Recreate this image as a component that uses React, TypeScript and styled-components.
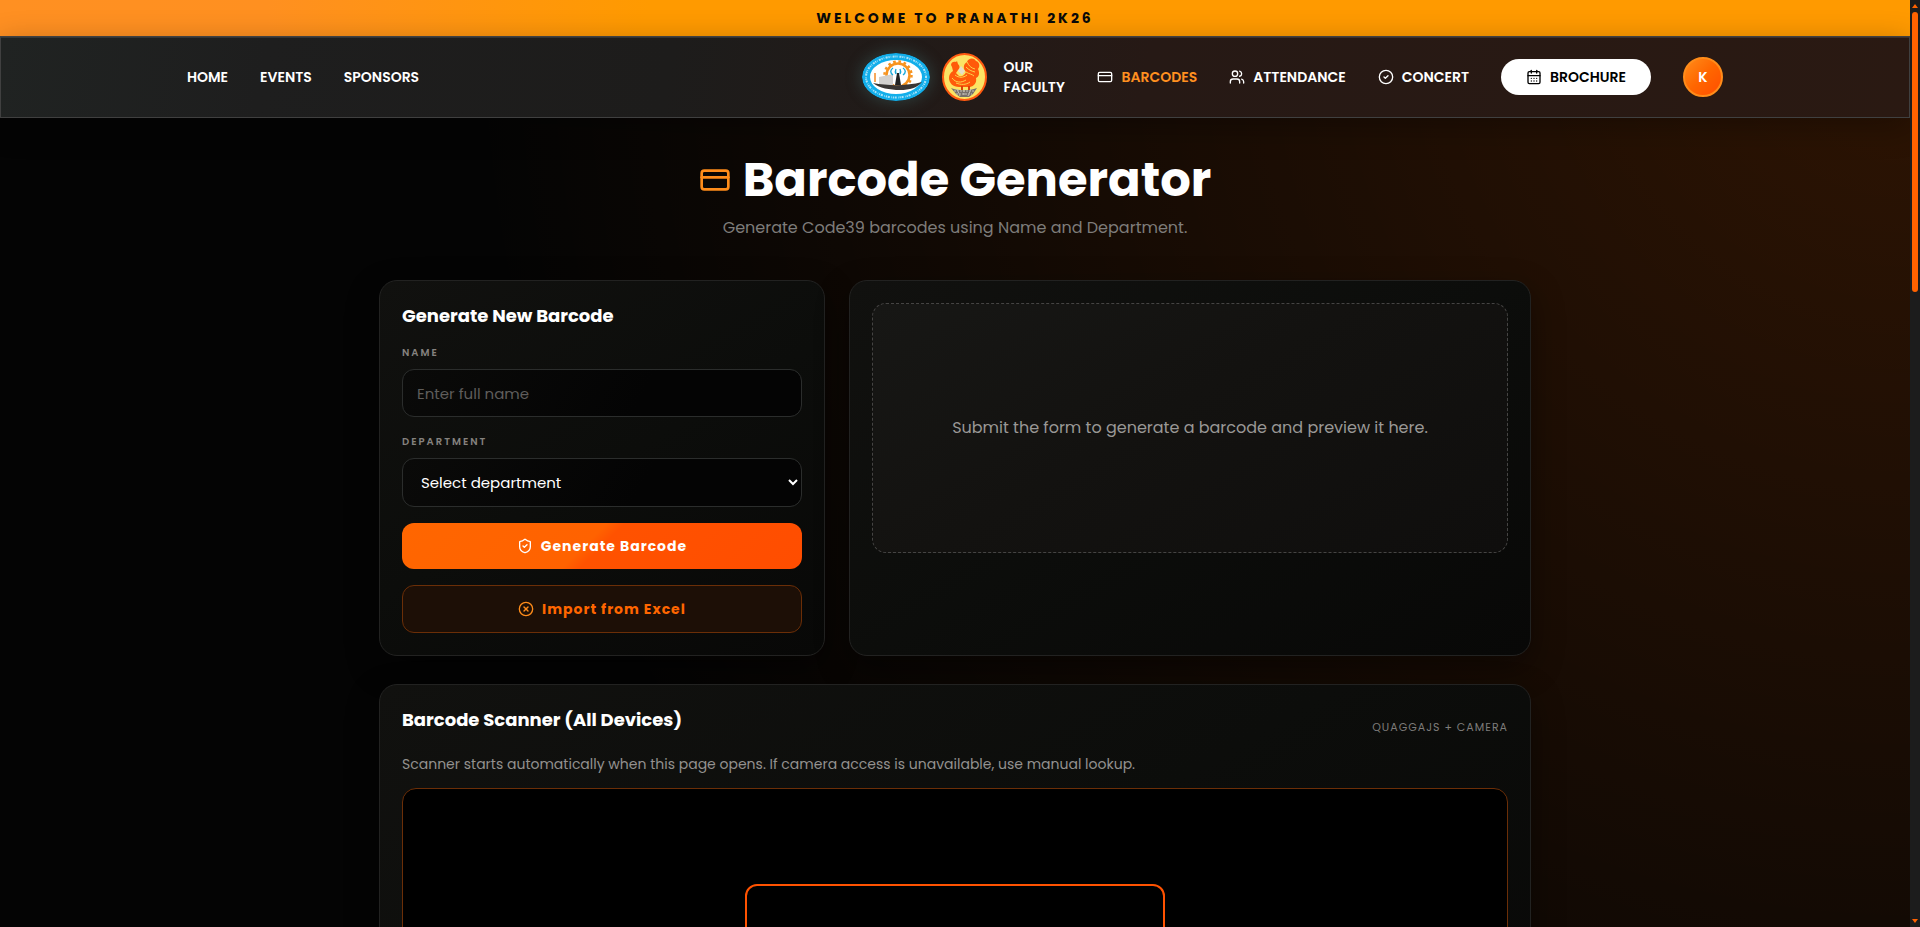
import React from "react";
import styled, { createGlobalStyle } from "styled-components";
import { CreditCard, Users, CircleCheck, CalendarDays, ShieldCheck, CircleX } from "lucide-react";

const GlobalStyle = createGlobalStyle`
  *, *::before, *::after { box-sizing: border-box; }
  body {
    margin: 0;
    background: #040404;
    color: #fff;
    font-family: Poppins, Inter, sans-serif;
    font-size: 16px;
    line-height: 24px;
  }
  h1, h2, p { margin: 0; }
  button, input, select { font-family: inherit; }
`;

const Shell = styled.div`
  display: flex;
  height: 100vh;
`;

const Page = styled.div`
  flex: 1;
  min-width: 0;
  overflow-y: auto;
  scrollbar-width: none;
  background: radial-gradient(circle at top right, rgba(255, 102, 0, 0.17), transparent 68%) #040404;
`;

const Rail = styled.div`
  flex: none;
  display: flex;
  flex-direction: column;
  justify-content: space-between;
  align-items: center;
  width: 10px;
  padding: 4px 0;
  background: #1c1c1c;
`;

const RailBody = styled.div`
  flex: 1;
  width: 6px;
  padding: 4px 0;
`;

const Thumb = styled.div`
  height: 31%;
  border-radius: 3px;
  background: #ff6200;
`;

const Arrow = styled.div<{ $down?: boolean }>`
  border: 3px solid transparent;
  border-top-width: ${(p) => (p.$down ? "4px" : "0")};
  border-bottom-width: ${(p) => (p.$down ? "0" : "4px")};
  border-top-color: ${(p) => (p.$down ? "#ff6200" : "transparent")};
  border-bottom-color: ${(p) => (p.$down ? "transparent" : "#ff6200")};
`;

const Banner = styled.div`
  height: 36px;
  background: linear-gradient(90deg, #ff9022 0%, #ff9020 14%, #ff9a00 34%, #ff9a00 100%);
  color: #0a0a0a;
  font-size: 14px;
  font-weight: 700;
  line-height: 36px;
  letter-spacing: 3px;
  text-align: center;
`;

const NavBar = styled.header`
  position: relative;
  border: 1px solid #404040;
  background: linear-gradient(100deg, #202322 0%, #1e1e1e 14%, #1d1c1b 35%, #261915 60%, #2a1912 100%);
  box-shadow: 0 8px 32px rgba(0, 0, 0, 0.3), inset 0 1px 0 rgba(255, 255, 255, 0.1);
`;

const NavInner = styled.div`
  display: flex;
  justify-content: space-between;
  align-items: center;
  max-width: 1536px;
  height: 80px;
  margin: 0 auto;
`;

const NavGroup = styled.nav`
  display: flex;
  align-items: center;
  gap: 32px;
`;

const NavLink = styled.a<{ $active?: boolean; $wrap?: boolean }>`
  display: flex;
  align-items: center;
  gap: 8px;
  width: ${(p) => (p.$wrap ? "62px" : "auto")};
  color: ${(p) => (p.$active ? "#ff9020" : "#fff")};
  font-size: 14px;
  font-weight: 600;
  line-height: 20px;
  text-decoration: none;
  text-transform: uppercase;
  svg { color: #fff; }
`;

const Logos = styled.div`
  display: flex;
  align-items: center;
  gap: 12px;
`;

const LogoCluster = styled.div`
  display: flex;
  align-items: center;
  gap: 16px;
`;

const CollegeLogo = styled.svg`
  display: block;
  border-radius: 50%;
  box-shadow: 0 0 14px 3px rgba(64, 110, 110, 0.35);
`;

const RoosterLogo = styled.svg`
  display: block;
`;

const Brochure = styled.button`
  display: flex;
  justify-content: center;
  align-items: center;
  gap: 8px;
  min-width: 150px;
  height: 36px;
  padding: 0 24px;
  border: 0;
  border-radius: 18px;
  background: #fff;
  color: #000;
  font-size: 14px;
  font-weight: 600;
  line-height: 20px;
`;

const Avatar = styled.button`
  width: 40px;
  height: 40px;
  padding: 0;
  border: 2px solid #ff8c1a;
  border-radius: 50%;
  background: linear-gradient(135deg, #ff8c1a 0%, #ff6600 50%, #ff4d00 100%);
  color: #fff;
  font-size: 14px;
  font-weight: 600;
`;

const Main = styled.main`
  display: flex;
  flex-direction: column;
  max-width: 1152px;
  margin: 0 auto;
  padding: 32px 0 64px;
`;

const Title = styled.h1`
  display: flex;
  justify-content: center;
  align-items: center;
  gap: 12px;
  font-size: 48px;
  font-weight: 700;
  line-height: 60px;
  svg { color: #ff8c1a; }
`;

const Subtitle = styled.p`
  margin: 6px 0 40px;
  color: #7e7c7a;
  text-align: center;
`;

const Columns = styled.div`
  display: grid;
  grid-template-columns: 17fr 26fr;
  gap: 24px;
  margin-bottom: 28px;
`;

const Card = styled.section`
  padding: 22px;
  border: 1px solid #222221;
  border-radius: 18px;
  background: linear-gradient(150deg, #11110f 0%, #0c0d0b 50%, #080807 100%);
  box-shadow: 0 12px 32px rgba(0, 0, 0, 0.4);
`;

const CardTitle = styled.h2`
  font-size: 18px;
  font-weight: 700;
  line-height: 25px;
`;

const Form = styled.form`
  display: flex;
  flex-direction: column;
  gap: 16px;
`;

const Field = styled.div`
  display: flex;
  flex-direction: column;
  gap: 8px;
`;

const Label = styled.label`
  color: #85827f;
  font-size: 10px;
  font-weight: 600;
  line-height: 17px;
  letter-spacing: 2px;
  text-transform: uppercase;
`;

const controlBase = `
  width: 100%;
  border: 1px solid #2b2d2c;
  border-radius: 12px;
  background: linear-gradient(120deg, #0a0a09, #040404 60%);
  font-size: 15px;
`;

const TextInput = styled.input`
  ${controlBase}
  height: 48px;
  padding: 0 14px;
  color: #fff;
  &::placeholder { color: #5f5d5b; opacity: 1; }
`;

const Select = styled.select`
  ${controlBase}
  height: 49px;
  padding: 0 0 0 14px;
  color: #fff;
`;

const Action = styled.button<{ $outline?: boolean }>`
  display: flex;
  justify-content: center;
  align-items: center;
  gap: 8px;
  height: ${(p) => (p.$outline ? "48px" : "46px")};
  border: ${(p) => (p.$outline ? "1px solid #6b2e07" : "0")};
  border-radius: 12px;
  background: ${(p) => (p.$outline ? "#1d0f06" : "linear-gradient(135deg, #ff6600 0%, #ff6200 46%, #ff5200 50%, #ff4d00 100%)")};
  color: ${(p) => (p.$outline ? "#ff6600" : "#fff")};
  font-size: 14px;
  font-weight: 700;
  letter-spacing: 1px;
  svg { color: ${(p) => (p.$outline ? "#ff8c1a" : "#fff")}; }
`;

const Preview = styled.div`
  display: flex;
  justify-content: center;
  align-items: center;
  height: 250px;
  border: 1px dashed #454443;
  border-radius: 14px;
  background: linear-gradient(150deg, #171715 0%, #131210 45%, #0f0e0d 100%);
  color: #9a9896;
`;

const ScannerHead = styled.div`
  display: flex;
  justify-content: space-between;
  align-items: flex-end;
  height: 32px;
`;

const ScannerTitle = styled(CardTitle)`
  align-self: flex-start;
`;

const Tag = styled.span`
  color: #7e7c7a;
  font-size: 11px;
  line-height: 24px;
  letter-spacing: 1px;
`;

const Hint = styled.p`
  margin: 14px 0 12px;
  color: #93918f;
  font-size: 14px;
  line-height: 23px;
`;

const Camera = styled.div`
  display: flex;
  justify-content: center;
  align-items: center;
  height: 320px;
  border: 1px solid #6b2e07;
  border-radius: 14px;
  background: #000;
`;

const Target = styled.div`
  width: 38%;
  height: 128px;
  border: 2px solid #ff5200;
  border-radius: 12px;
`;

function College() {
  return (
    <CollegeLogo width="68" height="48" viewBox="0 0 68 48" role="img" aria-label="College logo">
      <ellipse cx="34" cy="24" rx="34" ry="24" fill="#12aeea" />
      <ellipse cx="34" cy="24" rx="30" ry="20.500" fill="none" stroke="#a9e2f8" strokeWidth="2" strokeDasharray="1.200 1 .6 1.400 2 .8" />
      <ellipse cx="34" cy="24" rx="26" ry="17" fill="#fff" />
      <circle cx="36" cy="22" r="11.500" fill="#fff" stroke="#f7931e" strokeWidth="2.500" />
      <circle cx="36" cy="22" r="13.500" fill="none" stroke="#f7931e" strokeWidth="2.500" strokeDasharray="2.650 2.650" />
      <path d="M12 20h2v9h-2z" fill="#f7a85c" />
      <path d="M17 24l14-3v11H17z" fill="#d2d0ce" />
      <path d="M31 15c-3 2-3 5 0 7M41 15c3 2 3 5 0 7M34 16c-1 2-1 3 0 5M38 16c1 2 1 3 0 5" fill="none" stroke="#1aa9d8" strokeWidth="1.400" />
      <path d="M35 20h2l2 12h-6z" fill="#222" />
      <path d="M11 30c16 3 34 3 49-1-5 6-12 8-22 8s-21-2-27-7z" fill="#3a3634" />
    </CollegeLogo>
  );
}

function Rooster() {
  return (
    <RoosterLogo width="45" height="48" viewBox="0 0 45 48" role="img" aria-label="Festival logo">
      <ellipse cx="22.500" cy="24" rx="21.500" ry="23" fill="#fbe364" stroke="#ff5a10" strokeWidth="2" />
      <path d="M9 12c0-3 3-4 5-3l1-1 1 3c2 2 2 4 0 6l-2 3 3 3c3 1 6-1 7-4-3-3-3-8 1-10 1-4 7-5 9-1 4 1 4 6 2 8 2 4 1 8-2 9 1 5-2 8-6 9h-11c-6 0-10-4-10-9 0-3 1-5 4-7l-1-4z" fill="#ff5a0a" />
      <path d="M25 9c2 4 4 6 8 7M24 14c3 3 5 4 9 5M24 19c3 2 6 2 8 4M10 25c4 5 9 5 14 2M13 22c4 3 8 3 12 0M14 30c5 2 10 2 14-1" fill="none" stroke="#fbd24a" strokeWidth="1" />
      <path d="M19 13l4 5-3 4-4-4z" fill="#e5dcc8" />
      <path d="M20 33v4M27 33v4" stroke="#d8430a" strokeWidth="2" />
      <path d="M9 35c7 3 18 3 26 0l-4 6-4 3h-9l-4-3z" fill="#77716b" />
      <path d="M12 38l20 0M14 41h16M15 36l3 7M22 37v6M29 36l-3 7" stroke="#c7c2b8" strokeWidth="1" strokeDasharray="2 1" />
    </RoosterLogo>
  );
}

export default function App() {
  return (
    <>
      <GlobalStyle />
      <Shell>
        <Page>
          <Banner>WELCOME TO PRANATHI 2K26</Banner>
          <NavBar>
            <NavInner>
              <NavGroup>
                <NavLink href="#home">Home</NavLink>
                <NavLink href="#events">Events</NavLink>
                <NavLink href="#sponsors">Sponsors</NavLink>
              </NavGroup>
              <NavGroup>
                <LogoCluster>
                  <Logos>
                    <College />
                    <Rooster />
                  </Logos>
                  <NavLink href="#faculty" $wrap>Our Faculty</NavLink>
                </LogoCluster>
                <NavLink href="#barcodes" $active><CreditCard size={16} />Barcodes</NavLink>
                <NavLink href="#attendance"><Users size={16} />Attendance</NavLink>
                <NavLink href="#concert"><CircleCheck size={16} />Concert</NavLink>
                <Brochure type="button"><CalendarDays size={16} />BROCHURE</Brochure>
                <Avatar type="button">K</Avatar>
              </NavGroup>
            </NavInner>
          </NavBar>
          <Main>
            <Title><CreditCard size={32} />Barcode Generator</Title>
            <Subtitle>Generate Code39 barcodes using Name and Department.</Subtitle>
            <Columns>
              <Card>
                <Form onSubmit={(e) => e.preventDefault()}>
                  <CardTitle>Generate New Barcode</CardTitle>
                  <Field>
                    <Label htmlFor="name">Name</Label>
                    <TextInput id="name" placeholder="Enter full name" />
                  </Field>
                  <Field>
                    <Label htmlFor="department">Department</Label>
                    <Select id="department" defaultValue="">
                      <option value="">Select department</option>
                    </Select>
                  </Field>
                  <Action type="submit"><ShieldCheck size={16} />Generate Barcode</Action>
                  <Action type="button" $outline><CircleX size={16} />Import from Excel</Action>
                </Form>
              </Card>
              <Card>
                <Preview>Submit the form to generate a barcode and preview it here.</Preview>
              </Card>
            </Columns>
            <Card>
              <ScannerHead>
                <ScannerTitle>Barcode Scanner (All Devices)</ScannerTitle>
                <Tag>QUAGGAJS + CAMERA</Tag>
              </ScannerHead>
              <Hint>Scanner starts automatically when this page opens. If camera access is unavailable, use manual lookup.</Hint>
              <Camera><Target /></Camera>
            </Card>
          </Main>
        </Page>
        <Rail aria-hidden="true">
          <Arrow />
          <RailBody><Thumb /></RailBody>
          <Arrow $down />
        </Rail>
      </Shell>
    </>
  );
}
